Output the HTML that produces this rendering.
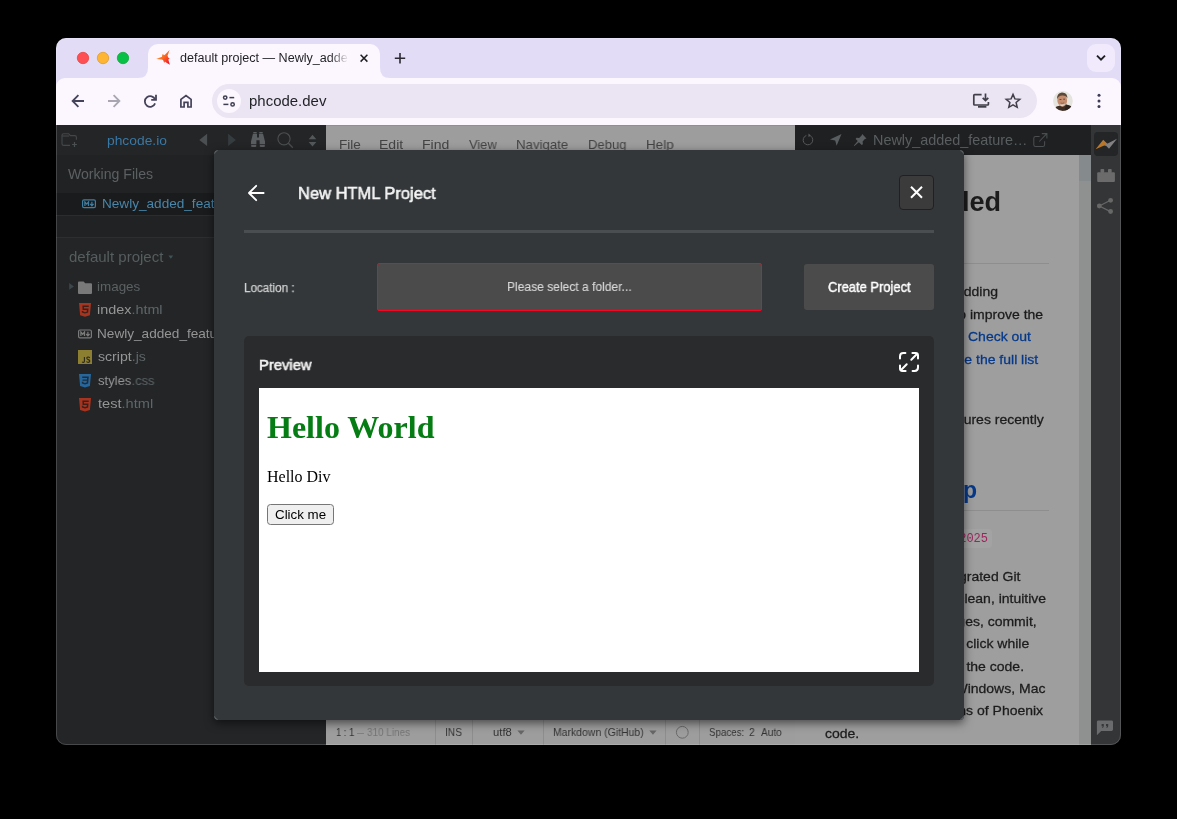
<!DOCTYPE html>
<html>
<head>
<meta charset="utf-8">
<title>default project</title>
<style>
html,body{margin:0;padding:0;background:#000;}
body{width:1177px;height:819px;overflow:hidden;position:relative;font-family:"Liberation Sans",sans-serif;}
#stage{position:absolute;left:0;top:0;width:1177px;height:819px;clip-path:inset(38px 56px 74px 56px round 10px);background:#222527;}
.a{position:absolute;}
.t{position:absolute;white-space:pre;line-height:1;transform-origin:0 0;will-change:transform;}
.t em{font-style:normal;color:#5e6668;}
svg{position:absolute;overflow:visible;}
.clip{position:absolute;overflow:hidden;}
/* chrome */
#tabstrip{left:56px;top:38px;width:1065px;height:52px;background:#e3dcf6;}
#toolbar{left:56px;top:78px;width:1065px;height:47px;background:#fcf7fe;border-radius:9px 9px 0 0;}
#tab{left:148px;top:44px;width:232px;height:34px;background:#fcf7fe;border-radius:10px 10px 0 0;}
#omni{left:212px;top:84px;width:825px;height:34px;border-radius:17px;background:#ebe4f3;}
#sitechip{left:217px;top:89px;width:24px;height:24px;border-radius:12px;background:#fcf7fe;}
#tabsearch{left:1087px;top:44px;width:28px;height:28px;border-radius:9px;background:#f1eafc;}
#tabfade{left:330px;top:48px;width:22px;height:20px;background:linear-gradient(90deg,rgba(252,247,254,0),#fcf7fe 85%);}
/* app */
#sidebar{left:56px;top:125px;width:270px;height:620px;background:#232527;}
#wfarea{left:56px;top:155px;width:270px;height:83px;background:#202224;}
#sidetop{left:56px;top:125px;width:270px;height:30px;background:#232527;}
#wfsel{left:56px;top:193px;width:270px;height:23px;background:#191b1c;border-bottom:1px solid #2a2c2d;box-sizing:border-box;}
#wfgap{left:56px;top:216px;width:270px;height:22px;background:#202224;border-bottom:1px solid #2c2e30;box-sizing:border-box;}
#menubar{left:326px;top:125px;width:469px;height:30px;background:#9d9d9d;border-top:1px solid #8f8f8f;box-sizing:border-box;}
#status{left:326px;top:720px;width:469px;height:25px;background:#9d9d9d;}
.sep{position:absolute;top:720px;width:1px;height:25px;background:#8d8d8d;}
#lphead{left:795px;top:125px;width:296px;height:30px;background:#1e2022;}
#lpbody{left:795px;top:155px;width:284px;height:590px;background:#9e9e9e;}
#lpscroll{left:1079px;top:155px;width:12px;height:590px;background:#8f9191;}
#lpthumb{left:1079px;top:155px;width:12px;height:26px;background:#858a8d;}
.hr{position:absolute;left:825px;width:224px;height:1px;background:#8e8e8e;}
#codebox{left:900px;top:529px;width:92px;height:19px;border-radius:3px;background:#a3a3a3;}
#rtool{left:1091px;top:125px;width:30px;height:620px;background:#333537;}
#rtsel{left:1094px;top:132px;width:24px;height:24px;border-radius:4px;background:#232527;}
/* dialog */
#dlg{left:214px;top:150px;width:750px;height:570px;background:#33373a;border-radius:4px;box-shadow:0 3px 10px rgba(0,0,0,.55);}
#dhr{left:244px;top:230px;width:690px;height:3px;background:#4b4e51;}
#closeb{left:899px;top:175px;width:35px;height:35px;box-sizing:border-box;border:1px solid #1f2022;border-radius:4px;background:#3b3b3b;}
#loc{left:377px;top:263px;width:385px;height:48px;box-sizing:border-box;border:1px solid #fa0421;border-radius:2px;background:#4b4b4b;}
#create{left:804px;top:264px;width:130px;height:46px;border-radius:3px;background:#4b4b4b;}
#pv{left:244px;top:336px;width:690px;height:350px;border-radius:5px;background:#2a2b2d;}
#frame{left:259px;top:388px;width:660px;height:284px;background:#fff;}
#btn{left:267px;top:504px;width:67px;height:21px;box-sizing:border-box;border:1px solid #767676;border-radius:3.5px;background:#efefef;}
</style>
</head>
<body>
<div id="stage">
  <!-- browser chrome -->
  <div class="a" id="tabstrip"></div>
  <div class="a" id="toolbar"></div>
  <div class="a" id="tab"></div>
  <svg width="1177" height="819" viewBox="0 0 1177 819" style="left:0;top:0"><path d="M138 78 Q148 78 148 68 V78 Z M390 78 Q380 78 380 68 V78 Z" fill="#fcf7fe"/></svg>

  <div class="a" id="omni"></div>
  <div class="a" id="sitechip"></div>
  <div class="a" id="tabsearch"></div>
  <span class="t" style="left:180.00px;top:52.00px;font-size:12.5px;color:#1f1f24;transform:scaleX(1.0063);">default project — Newly_adde</span>
<span class="t" style="left:248.82px;top:94.00px;font-size:14.3px;color:#1f2024;transform:scaleX(1.0466);">phcode.dev</span>
  <div class="a" id="tabfade"></div>
  <svg width="1177" height="819" viewBox="0 0 1177 819" style="left:0;top:0">
  <defs>
    <linearGradient id="fav" x1="0" y1="0" x2="1" y2="1"><stop offset="0.1" stop-color="#ffae42"/><stop offset=".5" stop-color="#fd6c20"/><stop offset=".95" stop-color="#f0122b"/></linearGradient>
    <clipPath id="avc"><circle cx="1062.9" cy="101" r="9.9"/></clipPath>
  </defs>
  <!-- traffic lights -->
  <circle cx="83" cy="58" r="5.7" fill="#fe4f54" stroke="#e8423f" stroke-width=".8"/>
  <circle cx="103" cy="58" r="5.7" fill="#feb534" stroke="#e19c27" stroke-width=".8"/>
  <circle cx="123" cy="58" r="5.7" fill="#07c045" stroke="#12a93a" stroke-width=".8"/>
  <!-- favicon -->
  <path d="M156.1 58.9 L162 56.8 L162.3 54.2 L164.6 54.9 L169.6 50.1 L167.5 55.7 L168.4 57.7 L169.7 58.6 L168.3 59.6 L169.9 64.8 L166.1 62.4 L164.9 61.5 L164.3 62.9 L163 60.1 L161.9 59.4 Z" fill="url(#fav)"/>
  <!-- tab close / new tab / chevron -->
  <path d="M360.6 54.8 L367.4 61.6 M367.4 54.8 L360.6 61.6" stroke="#1f1f24" stroke-width="1.5" fill="none"/>
  <path d="M400 53 V63.4 M394.8 58.2 H405.2" stroke="#2b2a33" stroke-width="1.6" fill="none"/>
  <path d="M1097 55.6 L1101 59.6 L1105 55.6" stroke="#1f1f24" stroke-width="1.9" fill="none" stroke-linejoin="miter"/>
  <!-- back / forward -->
  <path d="M84 101 H72.6 M78.4 95.2 L72.6 101 L78.4 106.8" stroke="#45435a" stroke-width="1.8" fill="none" stroke-linejoin="miter"/>
  <path d="M108 101 H119.4 M113.6 95.2 L119.4 101 L113.6 106.8" stroke="#a9a6b1" stroke-width="1.8" fill="none" stroke-linejoin="miter"/>
  <!-- reload -->
  <path d="M155.1 99.6 A5.3 5.3 0 1 0 155.1 103.4" stroke="#45435a" stroke-width="1.8" fill="none"/>
  <path d="M156 94.8 V99.8 H151.2" stroke="#45435a" stroke-width="1.8" fill="none"/>
  <!-- home -->
  <path d="M180.9 107 V99.4 L186 95.5 L191.1 99.4 V107 H187.9 V102.4 H184.1 V107 Z" stroke="#45435a" stroke-width="1.7" fill="none" stroke-linejoin="miter"/>
  <!-- site settings -->
  <g stroke="#3f3d52" stroke-width="1.5" fill="none">
    <circle cx="225.2" cy="97.6" r="1.7"/><path d="M229.4 97.6 H234.2"/>
    <circle cx="232.6" cy="104.4" r="1.7"/><path d="M223.4 104.4 H228.4"/>
  </g>
  <!-- install -->
  <g stroke="#403f49" stroke-width="1.7" fill="none">
    <path d="M981.6 94.6 H974.6 Q973.8 94.6 973.8 95.4 V104.2 Q973.8 105 974.6 105 H987.6 Q988.4 105 988.4 104.2 V102"/>
    <path d="M985.5 93.6 V100.4 M982.7 97.8 L985.5 100.6 L988.3 97.8"/>
  </g>
  <rect x="978" y="105.8" width="8.4" height="1.9" fill="#403f49"/>
  <!-- star -->
  <path d="M1013 94.4 L1014.9 98.9 L1019.8 99.3 L1016.1 102.5 L1017.2 107.3 L1013 104.8 L1008.8 107.3 L1009.9 102.5 L1006.2 99.3 L1011.1 98.9 Z" stroke="#403f49" stroke-width="1.5" fill="none" stroke-linejoin="miter"/>
  <!-- avatar -->
  <g clip-path="url(#avc)">
    <rect x="1052" y="90" width="22" height="22" fill="#e6e4de"/>
    <path d="M1052 112 L1056.5 106.6 L1060.4 105.4 L1066.2 104.6 L1071.4 106.4 L1074 112 Z" fill="#3e2f26"/>
    <path d="M1066.4 104.4 L1071.6 106.2 L1074 111 V112 H1064 Z" fill="#2e231d"/>
    <ellipse cx="1062.2" cy="100.4" rx="4.9" ry="6.3" fill="#c58d6f" transform="rotate(-6 1062.2 100.4)"/>
    <path d="M1057.2 99.2 Q1056.6 93 1061.8 92.4 Q1067.6 92.2 1067.4 98.6 Q1066.2 95.4 1062.2 95.6 Q1058.4 95.8 1057.2 99.2 Z" fill="#5b4839"/>
    <path d="M1059.2 104 Q1062.2 108.6 1065.6 103.6 Q1062.4 105.4 1059.2 104 Z" fill="#dcd5cb"/>
    <path d="M1059.6 99.5 h1.8 M1063.2 99.2 h1.8" stroke="#4a362b" stroke-width=".8"/>
    <path d="M1060.6 103 Q1062.4 103.8 1064.2 102.8" stroke="#8a4f3c" stroke-width=".7" fill="none"/>
  </g>
  <!-- menu dots -->
  <circle cx="1099" cy="95.3" r="1.5" fill="#3c3a55"/><circle cx="1099" cy="101" r="1.5" fill="#3c3a55"/><circle cx="1099" cy="106.5" r="1.5" fill="#3c3a55"/>
</svg>

  <!-- app -->
  <div class="a" id="sidebar"></div>
  <div class="a" id="sidetop"></div>
  <div class="a" id="wfarea"></div>
  <div class="a" id="wfsel"></div>
  <div class="a" id="wfgap"></div>
  <span class="t" style="left:106.83px;top:134.00px;font-size:13.5px;color:#3a78a5;transform:scaleX(1.0236);">phcode.io</span>
<span class="t" style="left:68.30px;top:168.00px;font-size:13.8px;color:#5d6062;transform:scaleX(1.0205);">Working Files</span>
<span class="t" style="left:101.57px;top:197.00px;font-size:13.2px;color:#4886aa;transform:scaleX(1.0300);">Newly_added_features.md</span>
<span class="t" style="left:68.88px;top:250.00px;font-size:14.4px;color:#565d5e;transform:scaleX(1.0440);">default project</span>
<span class="t" style="left:97.44px;top:280.00px;font-size:13.2px;color:#5c6163;transform:scaleX(1.0182);">images</span>
<span class="t" style="left:97.38px;top:303.00px;font-size:13.2px;color:#959595;transform:scaleX(1.0906);">index<em>.html</em></span>
<span class="t" style="left:97.37px;top:327.00px;font-size:13.2px;color:#959595;transform:scaleX(1.0309);">Newly_added_features.md</span>
<span class="t" style="left:97.93px;top:350.00px;font-size:13.2px;color:#959595;transform:scaleX(1.0705);">script<em>.js</em></span>
<span class="t" style="left:97.95px;top:374.00px;font-size:13.2px;color:#959595;transform:scaleX(0.9894);">styles<em>.css</em></span>
<span class="t" style="left:97.92px;top:397.00px;font-size:13.2px;color:#959595;transform:scaleX(1.1077);">test<em>.html</em></span>
  <svg width="1177" height="819" viewBox="0 0 1177 819" style="left:0;top:0">
  
  <!-- new project folder -->
  <g stroke="#444749" stroke-width="1.15" fill="none">
    <path d="M76.4 139.8 V137.2 Q76.4 135.6 74.8 135.6 H70.4 L68.6 133.7 H63.6 Q62 133.7 62 135.3 V143.7 Q62 145.3 63.6 145.3 H70"/>
    <path d="M62.2 136 H69.2"/>
  </g>
  <path d="M74.5 142.1 V146.9 M72.1 144.5 H76.9" stroke="#4d5052" stroke-width="1.2" fill="none"/>
  <!-- nav triangles -->
  <path d="M207.1 133.8 V146 L199.3 139.9 Z" fill="#4c4f51"/>
  <path d="M228.1 133.8 V146 L235.9 139.9 Z" fill="#353c40"/>
  <!-- binoculars -->
  <g fill="#5a5d5f">
    <path d="M253.3 132.1 H256.7 V133.4 H253.3 Z M259.3 132.1 H262.7 V133.4 H259.3 Z"/>
    <path d="M252.9 134 H257 V137.4 H259 V134 H263.1 L265 141.6 V144.2 H259.6 V140.2 H256.4 V144.2 H251 V141.6 Z"/>
    <path d="M251.2 144.9 H256.2 V146.7 Q253.7 147.2 251.2 146.7 Z M259.8 144.9 H264.8 V146.7 Q262.3 147.2 259.8 146.7 Z"/>
  </g>
  <!-- search -->
  <circle cx="284" cy="138.8" r="6.1" stroke="#4c4f51" stroke-width="1.1" fill="none"/>
  <path d="M288.4 143.2 L292.8 147.8" stroke="#4c4f51" stroke-width="1.3" fill="none"/>
  <!-- split up/down -->
  <path d="M312.5 134.8 L316.3 139.3 H308.7 Z M312.5 146.5 L316.3 142.1 H308.7 Z" fill="#54575a"/>
  <!-- working file md icon -->
  <g transform="translate(82 199.3)" stroke="#417fa2"><rect x=".6" y=".6" width="12.8" height="7.8" rx="1.4" fill="none" stroke-width="1.2"/><path d="M2.9 6.6 V2.6 L4.7 4.8 L6.5 2.6 V6.6" fill="none" stroke-width="1.25" stroke-linejoin="miter"/><path d="M9.9 2.4 V5.6 M8.2 4.6 L9.9 6.5 L11.6 4.6" fill="none" stroke-width="1.25"/></g>
  <!-- project dropdown -->
  <path d="M168.4 255.6 H173.2 L170.8 258.8 Z" fill="#3f5356"/>
  <!-- tree -->
  <path d="M69.2 283 L73.9 286.4 L69.2 289.8 Z" fill="#3d474b"/>
  <path d="M78 282.4 Q78 281.4 79 281.4 H83.6 L85.2 283.3 H91 Q92 283.3 92 284.3 V293.1 Q92 294.1 91 294.1 H79 Q78 294.1 78 293.1 Z" fill="#797979"/>
  <g transform="translate(79 303.1)" fill="#a7341f"><path d="M0 0 H12 L10.9 12.2 L6 13.7 L1.1 12.2 Z"/></g>
  <path d="M82.4 305.6 H88.7 V307.1 H83.9 V308.6 H88.5 L88.2 312.6 L85 313.6 L81.9 312.6 L81.8 311 H83.3 L83.4 311.7 L85 312.2 L86.7 311.7 L86.9 310.1 H82.6 Z" fill="#3a1f1b"/>
  <g transform="translate(78 329.4)" stroke="#7b7b7b"><rect x=".6" y=".6" width="12.8" height="7.8" rx="1.4" fill="none" stroke-width="1.2"/><path d="M2.9 6.6 V2.6 L4.7 4.8 L6.5 2.6 V6.6" fill="none" stroke-width="1.25" stroke-linejoin="miter"/><path d="M9.9 2.4 V5.6 M8.2 4.6 L9.9 6.5 L11.6 4.6" fill="none" stroke-width="1.25"/></g>
  <rect x="78" y="350" width="14" height="14" fill="#8d7f32"/>
  <path d="M84.4 357 V361.3 Q84.4 362.4 83.3 362.4 Q82.5 362.4 82.1 361.8" stroke="#2b2719" stroke-width="1.1" fill="none"/>
  <path d="M89.8 357.8 Q89 356.9 88 357 Q86.7 357.2 86.8 358.3 Q86.9 359.2 88.3 359.6 Q89.8 360 89.8 361.1 Q89.7 362.4 88.2 362.4 Q87.1 362.4 86.5 361.5" stroke="#2b2719" stroke-width="1.1" fill="none"/>
  <g transform="translate(79 373.9)" fill="#27679b"><path d="M0 0 H12 L10.9 12.2 L6 13.7 L1.1 12.2 Z"/></g>
  <path d="M82.2 376.4 H88.8 L88.2 383.4 L85 384.4 L81.9 383.4 L81.8 381.8 H83.3 L83.4 382.4 L85 382.9 L86.7 382.4 L86.9 380.8 H82.5 V379.4 H87 L87.1 377.9 H82.3 Z" fill="#1d2d3c"/>
  <g transform="translate(79 397.9)" fill="#a7341f"><path d="M0 0 H12 L10.9 12.2 L6 13.7 L1.1 12.2 Z"/></g>
  <path d="M82.4 400.4 H88.7 V401.9 H83.9 V403.4 H88.5 L88.2 407.4 L85 408.4 L81.9 407.4 L81.8 405.8 H83.3 L83.4 406.5 L85 407 L86.7 406.5 L86.9 404.9 H82.6 Z" fill="#3a1f1b"/>
</svg>

  <div class="a" id="menubar"></div>
  <div class="a" id="status"></div>
  <div class="sep" style="left:435px"></div><div class="sep" style="left:472px"></div><div class="sep" style="left:543px"></div><div class="sep" style="left:665px"></div><div class="sep" style="left:699px"></div>
  <span class="t" style="left:338.60px;top:138.00px;font-size:13.6px;color:#444;transform:scaleX(0.9951);">File</span>
<span class="t" style="left:379.37px;top:138.00px;font-size:13.6px;color:#444;transform:scaleX(1.0311);">Edit</span>
<span class="t" style="left:422.17px;top:138.00px;font-size:13.6px;color:#444;transform:scaleX(1.0327);">Find</span>
<span class="t" style="left:468.90px;top:138.00px;font-size:13.6px;color:#444;transform:scaleX(0.9470);">View</span>
<span class="t" style="left:516.43px;top:138.00px;font-size:13.6px;color:#444;transform:scaleX(0.9731);">Navigate</span>
<span class="t" style="left:588.24px;top:138.00px;font-size:13.6px;color:#444;transform:scaleX(0.9595);">Debug</span>
<span class="t" style="left:646.12px;top:138.00px;font-size:13.6px;color:#444;transform:scaleX(0.9849);">Help</span>
<span class="t" style="left:335.67px;top:727.00px;font-size:11.2px;color:#333;transform:scaleX(0.8439);">1 : 1</span>
<span class="t" style="left:356.90px;top:727.00px;font-size:11.2px;color:#777;transform:scaleX(0.6133);">—</span>
<span class="t" style="left:367.28px;top:727.00px;font-size:11.2px;color:#767676;transform:scaleX(0.8875);">310 Lines</span>
<span class="t" style="left:445.49px;top:727.00px;font-size:11.2px;color:#333;transform:scaleX(0.9101);">INS</span>
<span class="t" style="left:492.95px;top:727.00px;font-size:11.2px;color:#333;transform:scaleX(1.0057);">utf8</span>
<span class="t" style="left:553.00px;top:727.00px;font-size:11.2px;color:#333;transform:scaleX(0.9347);">Markdown (GitHub)</span>
<span class="t" style="left:709.26px;top:727.00px;font-size:11.2px;color:#333;transform:scaleX(0.8718);">Spaces:</span>
<span class="t" style="left:749.44px;top:727.00px;font-size:11.2px;color:#333;transform:scaleX(0.9143);">2</span>
<span class="t" style="left:760.90px;top:727.00px;font-size:11.2px;color:#333;transform:scaleX(0.9011);">Auto</span>
  <svg width="1177" height="819" viewBox="0 0 1177 819" style="left:0;top:0">
  <path d="M517.4 730.6 H524.6 L521 734.8 Z M649.3 730.6 H656.6 L652.95 734.8 Z" fill="#666"/>
  <circle cx="682.3" cy="732.3" r="5.9" stroke="#6a6a6a" stroke-width="1" fill="none"/>
</svg>

  <div class="a" id="lphead"></div>
  <div class="a" id="lpbody"></div>
  <div class="a" id="lpscroll"></div>
  <div class="a" id="lpthumb"></div>
  <div class="hr" style="top:263px"></div>
  <div class="hr" style="top:510px"></div>
  <div class="a" id="codebox"></div>
  <span class="t" style="left:873.18px;top:133.00px;font-size:14.2px;color:#5b5e60;transform:scaleX(1.0151);">Newly_added_feature…</span>
<span class="t" style="left:835.95px;top:189.00px;font-size:27px;color:#1c1c1c;font-weight:bold;">Newly added</span>
<span class="t" style="left:899.82px;top:285.00px;font-size:13.4px;color:#1c1c1c;transform:scaleX(1.0450);-webkit-text-stroke:0.28px #1c1c1c;">we keep adding</span>
<span class="t" style="left:899.56px;top:308.00px;font-size:13.4px;color:#1c1c1c;transform:scaleX(1.0450);-webkit-text-stroke:0.28px #1c1c1c;">features to improve the</span>
<span class="t" style="left:968.24px;top:330.00px;font-size:13.4px;color:#06398a;transform:scaleX(1.0450);-webkit-text-stroke:0.28px #06398a;">Check out</span>
<span class="t" style="left:933.76px;top:353.00px;font-size:13.4px;color:#06398a;transform:scaleX(1.0450);-webkit-text-stroke:0.28px #06398a;">to see the full list</span>
<span class="t" style="left:916.69px;top:413.00px;font-size:13.4px;color:#1c1c1c;transform:scaleX(1.0450);-webkit-text-stroke:0.28px #1c1c1c;">the features recently</span>
<span class="t" style="left:839.05px;top:479.00px;font-size:23px;color:#06398a;font-weight:bold;">Desktop app</span>
<span class="t" style="left:951.55px;top:533.00px;font-size:12px;color:#9c255b;font-family:'Liberation Mono';">12025</span>
<span class="t" style="left:903.44px;top:570.00px;font-size:13.4px;color:#1c1c1c;transform:scaleX(1.0450);-webkit-text-stroke:0.28px #1c1c1c;">Fully integrated Git</span>
<span class="t" style="left:916.87px;top:592.00px;font-size:13.4px;color:#1c1c1c;transform:scaleX(1.0450);-webkit-text-stroke:0.28px #1c1c1c;">with a clean, intuitive</span>
<span class="t" style="left:927.18px;top:615.00px;font-size:13.4px;color:#1c1c1c;transform:scaleX(1.0450);-webkit-text-stroke:0.28px #1c1c1c;">changes, commit,</span>
<span class="t" style="left:938.69px;top:637.00px;font-size:13.4px;color:#1c1c1c;transform:scaleX(1.0450);-webkit-text-stroke:0.28px #1c1c1c;">one click while</span>
<span class="t" style="left:946.74px;top:660.00px;font-size:13.4px;color:#1c1c1c;transform:scaleX(1.0450);-webkit-text-stroke:0.28px #1c1c1c;">on the code.</span>
<span class="t" style="left:935.01px;top:682.00px;font-size:13.4px;color:#1c1c1c;transform:scaleX(1.0450);-webkit-text-stroke:0.28px #1c1c1c;">on Windows, Mac</span>
<span class="t" style="left:920.80px;top:704.00px;font-size:13.4px;color:#1c1c1c;transform:scaleX(1.0450);-webkit-text-stroke:0.28px #1c1c1c;">versions of Phoenix</span>
<span class="t" style="left:824.68px;top:727.00px;font-size:13.4px;color:#1c1c1c;transform:scaleX(1.0450);-webkit-text-stroke:0.28px #1c1c1c;">code.</span>
  <svg width="1177" height="819" viewBox="0 0 1177 819" style="left:0;top:0">
  <!-- reload -->
  <path d="M806.3 135.5 A4.8 4.8 0 1 0 810.6 136" stroke="#575a5c" stroke-width="1" fill="none"/>
  <path d="M808.4 133.4 L811 135.5 L808.5 137 Z" fill="#575a5c"/>
  <!-- location arrow -->
  <path d="M841.5 134 L829.9 139.4 L835.2 140.6 L836.6 145.8 Z" fill="#5a5d5f"/>
  <!-- pin -->
  <path d="M862.2 134 L866.5 138.4 L864.9 139 L862.6 141.4 L862.9 144.2 L861.7 145 L858.9 142.2 L854.4 146 L853.9 145.6 L857.8 141.1 L855.6 138.9 L856.5 137.8 L859.2 138.1 L861.6 135.6 Z" fill="#5a5d5f"/>
  <!-- popout -->
  <path d="M1039.6 136.4 H1035.6 Q1033.8 136.4 1033.8 138.2 V144.7 Q1033.8 146.5 1035.6 146.5 H1042.8 Q1044.6 146.5 1044.6 144.7 V141.2" stroke="#4b4e50" stroke-width="1.05" fill="none"/>
  <path d="M1039.3 141.5 L1046.8 133.7 M1041.8 133.6 H1046.9 V138.6" stroke="#4b4e50" stroke-width="1.05" fill="none"/>
</svg>

  <div class="a" id="rtool"></div>
  <div class="a" id="rtsel"></div>
  <svg width="1177" height="819" viewBox="0 0 1177 819" style="left:0;top:0">
  <path d="M1095.6 149.3 L1103.2 139.8 L1108.2 144.4 L1104.2 145.4 Z" fill="#b8772b"/>
  <path d="M1104.2 145.3 L1117 138.8 L1109 148.7 L1106.3 145.9 Z" fill="#828282"/>
  <g fill="#6b6b6b">
    <rect x="1097.2" y="172.2" width="17.7" height="9.8" rx="1"/>
    <rect x="1100.5" y="169" width="3.7" height="4" rx=".8"/><rect x="1108" y="169" width="3.7" height="4" rx=".8"/>
  </g>
  <g fill="#676767" stroke="#676767">
    <path d="M1099.3 206 L1110.5 200.2 M1099.3 206 L1110.5 211.6" stroke-width="1.2" fill="none"/>
    <circle cx="1099.3" cy="206" r="2.4" stroke="none"/><circle cx="1110.6" cy="200.3" r="2.4" stroke="none"/><circle cx="1110.6" cy="211.5" r="2.4" stroke="none"/>
  </g>
  <path d="M1098.3 720.4 H1111.6 Q1113 720.4 1113 721.8 V729.6 Q1113 731 1111.6 731 H1101.2 L1096.9 735.2 V721.8 Q1096.9 720.4 1098.3 720.4 Z" fill="#696b6d"/>
  <path d="M1101.6 724 h2.2 v2 q0 1.6 -1.6 2.1 l-.3 -.6 q.8 -.4 .8 -1.3 h-1.1 Z M1106 724 h2.2 v2 q0 1.6 -1.6 2.1 l-.3 -.6 q.8 -.4 .8 -1.3 h-1.1 Z" fill="#35373a"/>
</svg>

  <!-- dialog -->
  <div class="a" id="dlg"></div>
  <div class="a" id="dhr"></div>
  <div class="a" id="closeb"></div>
  <div class="a" id="loc"></div>
  <div class="a" id="create"></div>
  <div class="a" id="pv"></div>
  <div class="a" id="frame"></div>
  <div class="a" id="btn"></div>
  <span class="t" style="left:298.20px;top:185.00px;font-size:17.2px;color:#f4f4f4;transform:scaleX(0.9589);-webkit-text-stroke:0.6px #f4f4f4;">New HTML Project</span>
<span class="t" style="left:243.63px;top:282.00px;font-size:12px;color:#d0d0d0;transform:scaleX(0.9720);-webkit-text-stroke:0.25px #d0d0d0;">Location :</span>
<span class="t" style="left:507.09px;top:280.00px;font-size:13.2px;color:#d8d8d8;transform:scaleX(0.9140);-webkit-text-stroke:0.12px #d8d8d8;">Please select a folder...</span>
<span class="t" style="left:827.62px;top:280.00px;font-size:14.2px;color:#ffffff;transform:scaleX(0.9111);-webkit-text-stroke:0.45px #ffffff;">Create Project</span>
<span class="t" style="left:259.07px;top:357.00px;font-size:15px;color:#f2f2f2;transform:scaleX(0.9856);-webkit-text-stroke:0.6px #f2f2f2;">Preview</span>
<span class="t" style="left:266.60px;top:411.00px;font-size:32px;color:#067d14;font-weight:bold;font-family:'Liberation Serif';">Hello World</span>
<span class="t" style="left:266.60px;top:469.00px;font-size:16px;color:#000;font-family:'Liberation Serif';">Hello Div</span>
<span class="t" style="left:275.00px;top:508.00px;font-size:13.33px;color:#000;">Click me</span>
  <svg width="1177" height="819" viewBox="0 0 1177 819" style="left:0;top:0">
  <!-- back arrow -->
  <path d="M263.6 193 H249.2 M256.2 185.8 L249 193 L256.2 200.2" stroke="#fff" stroke-width="1.9" fill="none" stroke-linecap="round" stroke-linejoin="round"/>
  <!-- close x -->
  <path d="M911 186.8 L922 197.8 M922 186.8 L911 197.8" stroke="#fff" stroke-width="2" fill="none"/>
  <!-- expand -->
  <g stroke="#fff" stroke-width="2" fill="none" stroke-linecap="round" stroke-linejoin="round">
    <path d="M900 358.4 V356.4 Q900 353 903.4 353 H905.4"/>
    <path d="M918 365.6 V367.6 Q918 371 914.6 371 H912.6"/>
    <path d="M912.4 353 H915.6 Q918 353 918 355.4 V358.6 M917.2 353.8 L911.3 359.7"/>
    <path d="M905.6 371 H902.4 Q900 371 900 368.6 V365.4 M900.8 370.2 L906.7 364.3"/>
  </g>
  <g stroke="#6c6f71" stroke-width="1" fill="none" opacity=".9">
    <path d="M214.6 153.6 Q214.8 150.8 217.6 150.6"/>
    <path d="M963.4 153.6 Q963.2 150.8 960.4 150.6"/>
    <path d="M214.6 716.4 Q214.8 719.2 217.6 719.4"/>
    <path d="M963.4 716.4 Q963.2 719.2 960.4 719.4"/>
  </g>
</svg>

</div>
<div class="a" id="winborder" style="left:56px;top:38px;width:1063px;height:705px;border:1px solid rgba(255,255,255,.16);border-radius:10px;pointer-events:none;"></div>
</body>
</html>
